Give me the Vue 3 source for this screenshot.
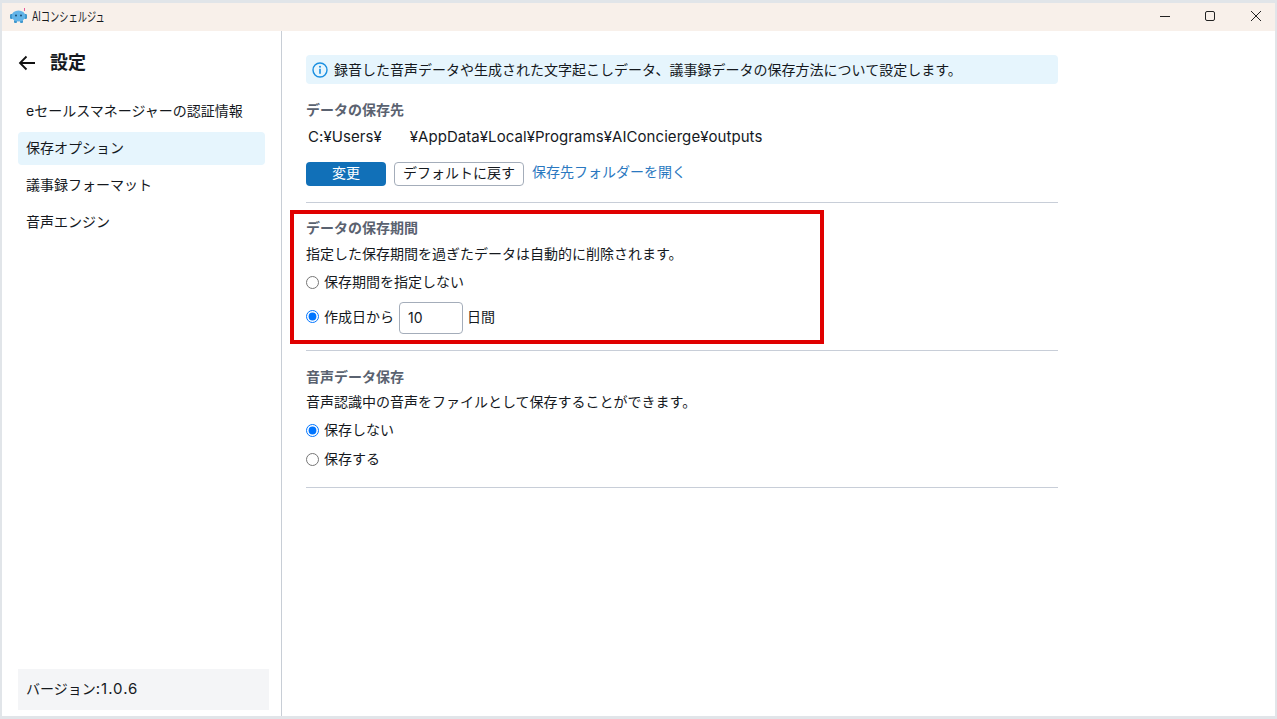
<template>
  <div class="window">
    <header class="titlebar">
      <svg class="logo" width="17" height="16" viewBox="0 0 17 16">
        <line x1="14.5" y1="0" x2="14.5" y2="3" stroke="#e85a9a" stroke-width="1" />
        <rect x="0" y="6" width="3" height="5" rx="1.2" fill="#3d96cc" />
        <rect x="14" y="6" width="3" height="5" rx="1.2" fill="#3d96cc" />
        <rect x="4" y="12" width="3" height="3" rx="1" fill="#3d96cc" />
        <rect x="10" y="12" width="3" height="3" rx="1" fill="#3d96cc" />
        <ellipse cx="8.5" cy="8" rx="6.8" ry="5.6" fill="#62b4e8" />
        <circle cx="6" cy="7.5" r="1" fill="#1d4f74" />
        <circle cx="11" cy="7.5" r="1" fill="#1d4f74" />
      </svg>
      <span class="app-name">AIコンシェルジュ</span>
      <div class="win-controls">
        <svg width="12" height="12" viewBox="0 0 12 12"><line x1="2" y1="6.5" x2="12" y2="6.5" stroke="#222" /></svg>
        <svg width="12" height="12" viewBox="0 0 12 12"><rect x="1.5" y="1.5" width="9" height="9" rx="1.5" fill="none" stroke="#222" /></svg>
        <svg width="12" height="12" viewBox="0 0 12 12"><path d="M1 1l10 10M11 1L1 11" stroke="#222" fill="none" /></svg>
      </div>
    </header>

    <div class="body">
      <aside class="sidebar">
        <div class="side-head">
          <svg width="18" height="16" viewBox="0 0 18 16">
            <path d="M17 8H2M8.5 1.5L2 8l6.5 6.5" fill="none" stroke="#111" stroke-width="1.8" />
          </svg>
          <span class="side-title">設定</span>
        </div>
        <nav class="nav">
          <a v-for="item in navItems" :key="item" class="nav-item" :class="{ active: item === current }">{{ item }}</a>
        </nav>
        <div class="version">バージョン<span class="version-no">:1.0.6</span></div>
      </aside>

      <main class="content">
        <div class="info">
          <svg width="16" height="16" viewBox="0 0 16 16">
            <circle cx="8" cy="8" r="7" fill="none" stroke="#1a8fe0" stroke-width="1.4" />
            <circle cx="8" cy="4.8" r="1" fill="#1a8fe0" />
            <rect x="7.2" y="6.8" width="1.6" height="5" fill="#1a8fe0" />
          </svg>
          <span>録音した音声データや生成された文字起こしデータ、議事録データの保存方法について設定します。</span>
        </div>

        <section class="section first">
          <h3>データの保存先</h3>
          <p class="path">C:¥Users¥<span class="masked"></span>¥AppData¥Local¥Programs¥AIConcierge¥outputs</p>
          <div class="actions">
            <button class="btn primary">変更</button>
            <button class="btn">デフォルトに戻す</button>
            <a class="link">保存先フォルダーを開く</a>
          </div>
        </section>

        <section class="section retention">
          <h3>データの保存期間</h3>
          <p class="desc">指定した保存期間を過ぎたデータは自動的に削除されます。</p>
          <label class="radio-row">
            <input type="radio" name="period" />
            <span>保存期間を指定しない</span>
          </label>
          <label class="radio-row days">
            <input type="radio" name="period" checked />
            <span>作成日から</span>
            <input class="days-input" type="text" value="10" />
            <span class="unit">日間</span>
          </label>
          <div class="highlight"></div>
        </section>

        <section class="section audio">
          <h3>音声データ保存</h3>
          <p class="desc">音声認識中の音声をファイルとして保存することができます。</p>
          <label class="radio-row">
            <input type="radio" name="audio" checked />
            <span>保存しない</span>
          </label>
          <label class="radio-row">
            <input type="radio" name="audio" />
            <span>保存する</span>
          </label>
        </section>
      </main>
    </div>
  </div>
</template>

<script setup>
const navItems = ['eセールスマネージャーの認証情報', '保存オプション', '議事録フォーマット', '音声エンジン']
const current = '保存オプション'
</script>

<style>
html, body { margin: 0; background: #fff; }
</style>

<style scoped>
.window {
  box-sizing: border-box;
  width: 1277px;
  height: 719px;
  display: flex;
  flex-direction: column;
  border: solid #e1e5e9;
  border-width: 3px 2px 3px 2px;
  font-family: Inter, "Noto Sans CJK JP", sans-serif;
  font-size: 14px;
  line-height: 20px;
  color: #15191e;
  background: #fff;
}

.titlebar {
  height: 28px;
  flex: none;
  display: flex;
  align-items: center;
  padding-left: 8px;
  background: #f8f0ea;
}
.logo { margin: 0 5px 2px 0; }
.app-name {
  font-size: 13px;
  white-space: nowrap;
  margin-bottom: 2px;
  transform: scaleX(0.71);
  transform-origin: left center;
}
.win-controls {
  margin-left: auto;
  display: flex;
  gap: 34px;
  padding: 0 13px 3px 0;
}

.body { flex: 1; display: flex; min-height: 0; }

.sidebar {
  width: 280px;
  box-sizing: border-box;
  flex: none;
  display: flex;
  flex-direction: column;
  padding: 0 12px 6px 16px;
  border-right: 1px solid #c8ced6;
}
.side-head {
  display: flex;
  align-items: center;
  gap: 14px;
  height: 24px;
  margin-top: 20px;
}
.side-title { font-size: 18px; font-weight: 700; }
.nav { display: flex; flex-direction: column; gap: 4px; margin-top: 20px; margin-right: 4px; }
.nav-item {
  height: 33px;
  line-height: 32px;
  padding-left: 8px;
  border-radius: 4px;
}
.nav-item.active { background: #e6f5fd; }
.version {
  margin-top: auto;
  height: 41px;
  line-height: 40px;
  padding-left: 8px;
  background: #f4f5f7;
}
.version-no { font-size: 15px; letter-spacing: 1px; }

.content {
  width: 752px;
  padding: 24px 0 0 24px;
}
.info {
  height: 29px;
  display: flex;
  align-items: center;
  gap: 6px;
  padding-left: 6px;
  background: #e6f5fd;
  border-radius: 4px;
}

.section { position: relative; border-bottom: 1px solid #c8ced8; }
.section h3 {
  margin: 0;
  font-size: 14px;
  font-weight: 700;
  color: #5a6270;
  line-height: 20px;
}
.section p { margin: 0; }

.section.first { padding: 16px 0 16px; }
.path { font-size: 15px; letter-spacing: 0.06px; line-height: 20px; margin-top: 7px !important; padding-left: 2px; }
.masked { display: inline-block; width: 28px; }
.actions { display: flex; align-items: center; gap: 8px; margin-top: 15px; }
.btn {
  box-sizing: border-box;
  height: 24px;
  padding: 0 8px 2px;
  border: 1px solid #a4adba;
  border-radius: 4px;
  background: #fff;
  font: inherit;
  color: #15191e;
}
.btn.primary {
  width: 80px;
  border: none;
  background: #1170b8;
  color: #fff;
}
.link { color: #2a78c0; position: relative; top: -2px; }

.section.retention { padding: 15px 0 16px; }
.desc { line-height: 20px; margin-top: 6px !important; }
.radio-row { display: flex; align-items: center; gap: 5px; }
.radio-row input[type="radio"] {
  width: 13px;
  height: 13px;
  margin: 0;
  accent-color: #0075ff;
}
.retention .radio-row { margin-top: 8px; height: 20px; }
.retention .days { margin-top: 10px; height: 32px; }
.days span { margin-bottom: 2px; }
.days .unit { margin-left: -1px; }
.radio-row.days input[type="radio"] { margin-bottom: 4px; }
.days-input {
  box-sizing: border-box;
  width: 64px;
  height: 32px;
  padding: 0 8px 2px;
  border: 1px solid #a4adba;
  border-radius: 4px;
  font: inherit;
  color: #15191e;
}
.highlight {
  position: absolute;
  left: -16px;
  top: 7px;
  width: 534px;
  height: 134px;
  box-sizing: border-box;
  border: 4px solid #e00000;
  pointer-events: none;
}

.section.audio { padding: 16px 0 18px; }
.audio .desc { margin-top: 5px !important; }
.audio .radio-row { height: 20px; margin-top: 9px; }
.audio .desc + .radio-row { margin-top: 8px; }
</style>
